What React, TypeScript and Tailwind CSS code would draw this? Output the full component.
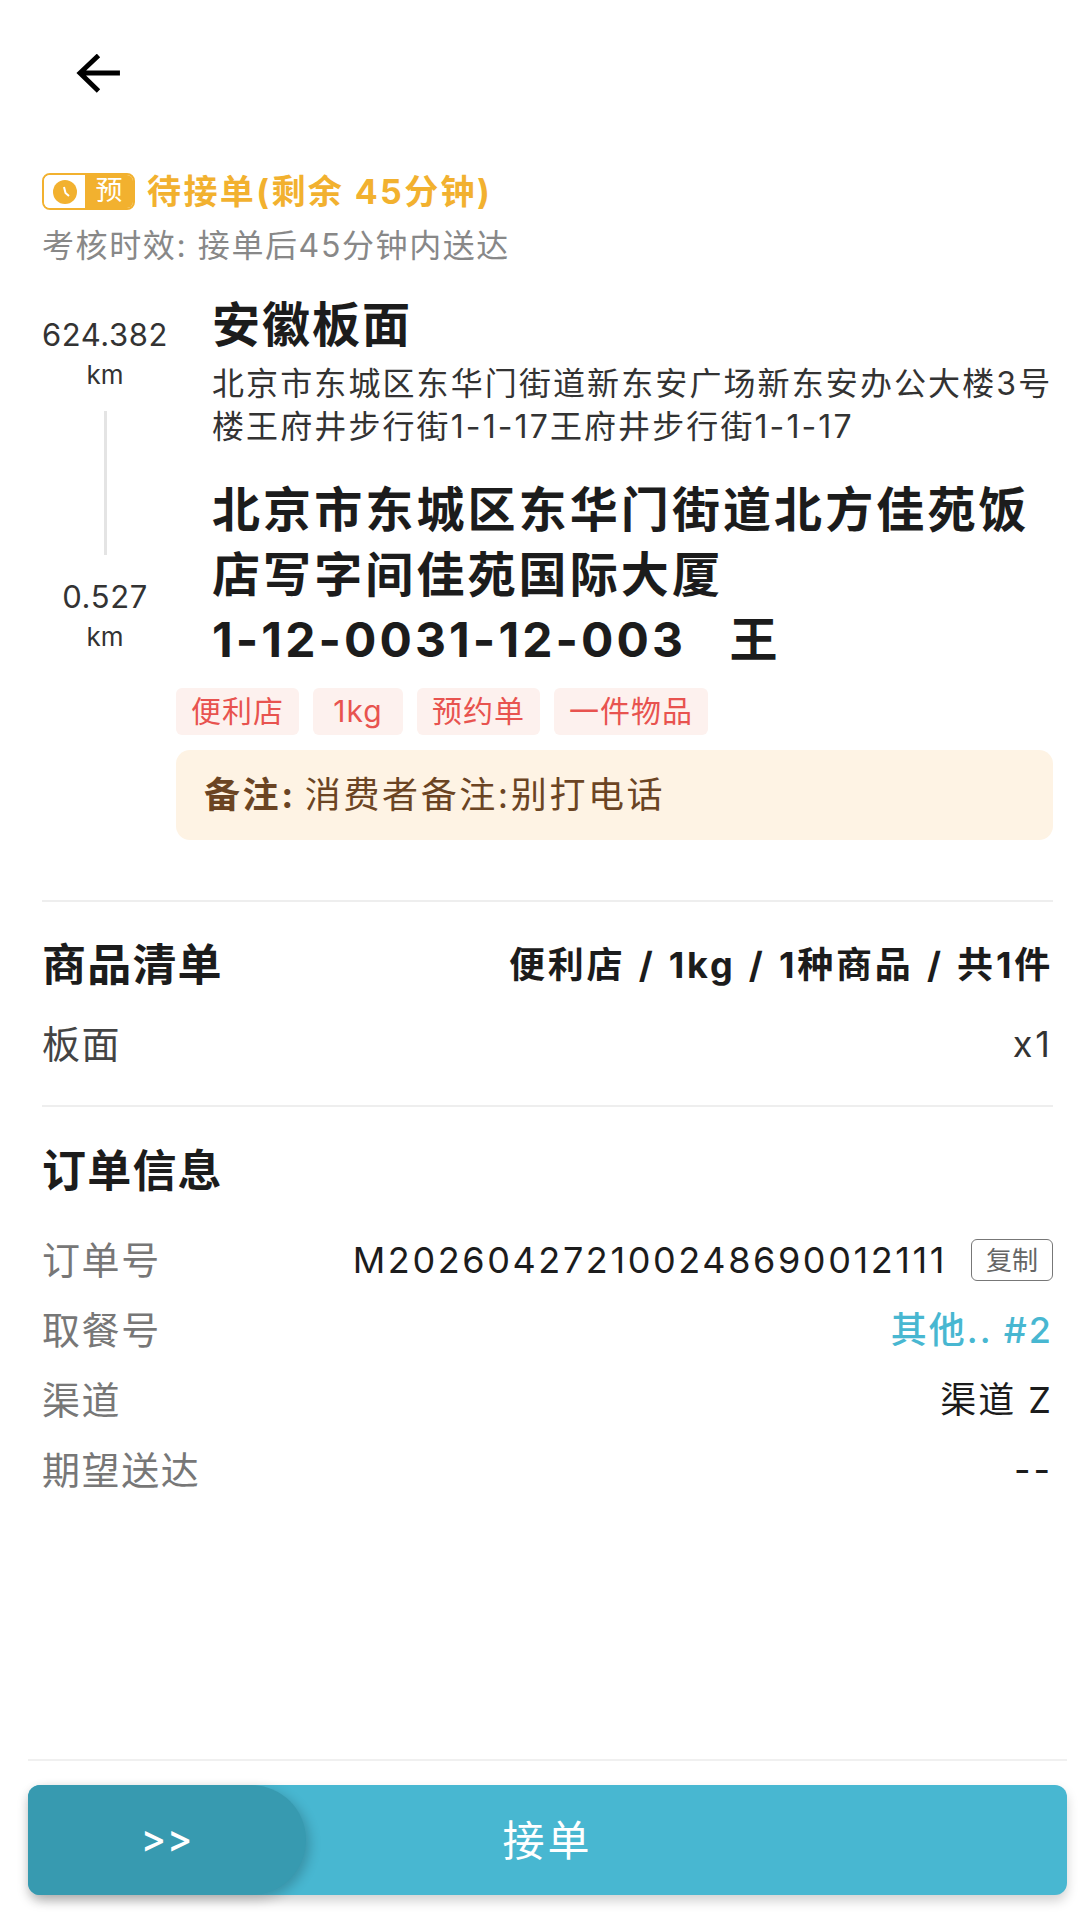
const FONT = "font-['Inter','Noto_Sans_CJK_SC',sans-serif]"

const InfoRow = ({ label, children }: { label: string; children: React.ReactNode }) => (
  <div className="flex h-[70px] items-center justify-between">
    <span className="text-[38px] tracking-[1.6px] text-[#777777]">{label}</span>
    {children}
  </div>
)

const Tag = ({ text, wide }: { text: string; wide?: boolean }) => (
  <span
    className={`flex h-[47px] items-center justify-center rounded-[6px] bg-[#fdf1ee] text-[30px] tracking-[1px] text-[#e8534f] ${
      wide ? "w-[90px]" : "px-[15px]"
    }`}
  >
    {text}
  </span>
)

const App = () => {
  return (
    <div className={`${FONT} flex min-h-[1920px] w-[1080px] flex-col bg-white text-[#1c1c1c]`}>
      <div className="flex h-[173px] items-start pl-[76px] pt-[54px]">
        <svg width="44" height="39" viewBox="0 0 45 40" fill="none" stroke="#000" strokeWidth="5">
          <path d="M45 19.5H4M23 1.5L4 19.5L23 38" />
        </svg>
      </div>

      <div className="pl-[42px] pr-[27px]">
        <div className="flex h-[37px] items-center gap-[12px]">
          <div className="flex h-[37px] w-[93px] overflow-hidden rounded-[8px] border-[2.5px] border-[#f2b12f]">
            <div className="flex w-[41px] items-center justify-center bg-white">
              <svg width="24" height="24" viewBox="0 0 24 24">
                <circle cx="12" cy="12" r="12" fill="#f2b12f" />
                <path d="M11 7L12.5 13L16 16" fill="none" stroke="#fff" strokeWidth="2" />
              </svg>
            </div>
            <div className="flex flex-1 items-center justify-center bg-[#f2b12f] text-[27px] text-white">预</div>
          </div>
          <span className="text-[34px] font-bold leading-none tracking-[2.4px] text-[#f2b12f]">待接单(剩余 45分钟)</span>
        </div>

        <div className="mt-[14px] text-[32px] leading-[44px] tracking-[1.6px] text-[#888888]">考核时效: 接单后45分钟内送达</div>

        <div className="mt-[23px] flex gap-[44px]">
          <div className="flex w-[126px] shrink-0 flex-col items-center pt-[24px] text-[#333333]">
            <span className="text-[31px] leading-[40px] tracking-[0.6px]">624.382</span>
            <span className="text-[26px] leading-[40px]">km</span>
            <div className="mt-[16px] h-[144px] w-[3px] bg-[#e4e4e4]" />
            <span className="mt-[22px] text-[31px] leading-[40px] tracking-[0.6px]">0.527</span>
            <span className="text-[26px] leading-[40px]">km</span>
          </div>
          <div className="min-w-0 flex-1">
            <div className="pt-[2px] text-[48px] font-bold leading-[64px] tracking-[2px]">安徽板面</div>
            <div className="mt-[5px] text-[32px] leading-[43px] tracking-[2.1px] text-[#333333]">
              北京市东城区东华门街道新东安广场新东安办公大楼3号楼王府井步行街1-1-17王府井步行街1-1-17
            </div>
            <div className="mt-[29px] text-[48px] font-bold leading-[65px] tracking-[3.1px]">
              <div>北京市东城区东华门街道北方佳苑饭</div>
              <div>店写字间佳苑国际大厦</div>
              <div>1-12-0031-12-003&nbsp;&nbsp;&nbsp;王</div>
            </div>
          </div>
        </div>

        <div className="ml-[134px] mt-[16px] flex gap-[14px]">
          <Tag text="便利店" />
          <Tag text="1kg" wide />
          <Tag text="预约单" />
          <Tag text="一件物品" />
        </div>

        <div className="ml-[134px] mt-[15px] flex h-[90px] items-center rounded-[14px] bg-[#fef3e4] px-[28px] text-[36px] tracking-[2.6px] text-[#6b4423]">
          <span className="font-bold">备注:</span>
          <span className="ml-[9px]">消费者备注:别打电话</span>
        </div>

        <div className="mt-[60px] h-[2px] bg-[#eeeeee]" />

        <div className="mt-[35px] flex h-[56px] items-center justify-between">
          <span className="text-[44px] font-bold tracking-[1.2px]">商品清单</span>
          <span className="text-[36px] font-bold tracking-[2.8px] [word-spacing:2px]">便利店 / 1kg / 1种商品 / 共1件</span>
        </div>
        <div className="mt-[28px] flex h-[46px] items-center justify-between text-[38px]">
          <span className="tracking-[1.6px] text-[#444444]">板面</span>
          <span className="text-[36px] tracking-[3px] text-[#333333]">x1</span>
        </div>

        <div className="mt-[38px] h-[2px] bg-[#eeeeee]" />

        <div className="mt-[36px] h-[56px] text-[44px] font-bold leading-[56px] tracking-[1.2px]">订单信息</div>

        <div className="mt-[26px]">
          <InfoRow label="订单号">
            <div className="flex items-center gap-[24px]">
              <span className="text-[36px] tracking-[2.6px]">M202604272100248690012111</span>
              <span className="flex h-[42px] w-[82px] items-center justify-center rounded-[6px] border-[1.5px] border-[#777777] text-[26px] text-[#666666]">
                复制
              </span>
            </div>
          </InfoRow>
          <InfoRow label="取餐号">
            <span className="text-[36px] font-medium tracking-[2px] text-[#48b7d1]">其他.. #2</span>
          </InfoRow>
          <InfoRow label="渠道">
            <span className="text-[36px] tracking-[2px]">渠道 Z</span>
          </InfoRow>
          <InfoRow label="期望送达">
            <span className="text-[36px] tracking-[3px]">--</span>
          </InfoRow>
        </div>
      </div>

      <div className="mt-auto pb-[25px] pl-[28px] pr-[13px]">
        <div className="h-[2px] bg-[#f0f0f0]" />
        <div className="relative mt-[24px] flex h-[110px] items-center justify-center rounded-[12px] bg-[#48b7d1] shadow-[0_6px_12px_rgba(0,0,0,0.18)]">
          <span className="text-[42px] tracking-[3px] text-white">接单</span>
          <div className="absolute inset-y-0 left-0 flex w-[278px] items-center justify-center rounded-l-[12px] rounded-r-[55px] bg-[#379ab0] shadow-[4px_4px_12px_rgba(0,0,0,0.2)]">
            <span className="-mt-[4px] text-[38px] font-medium tracking-[1px] text-white">&gt;&gt;</span>
          </div>
        </div>
      </div>
    </div>
  )
}

export default App
